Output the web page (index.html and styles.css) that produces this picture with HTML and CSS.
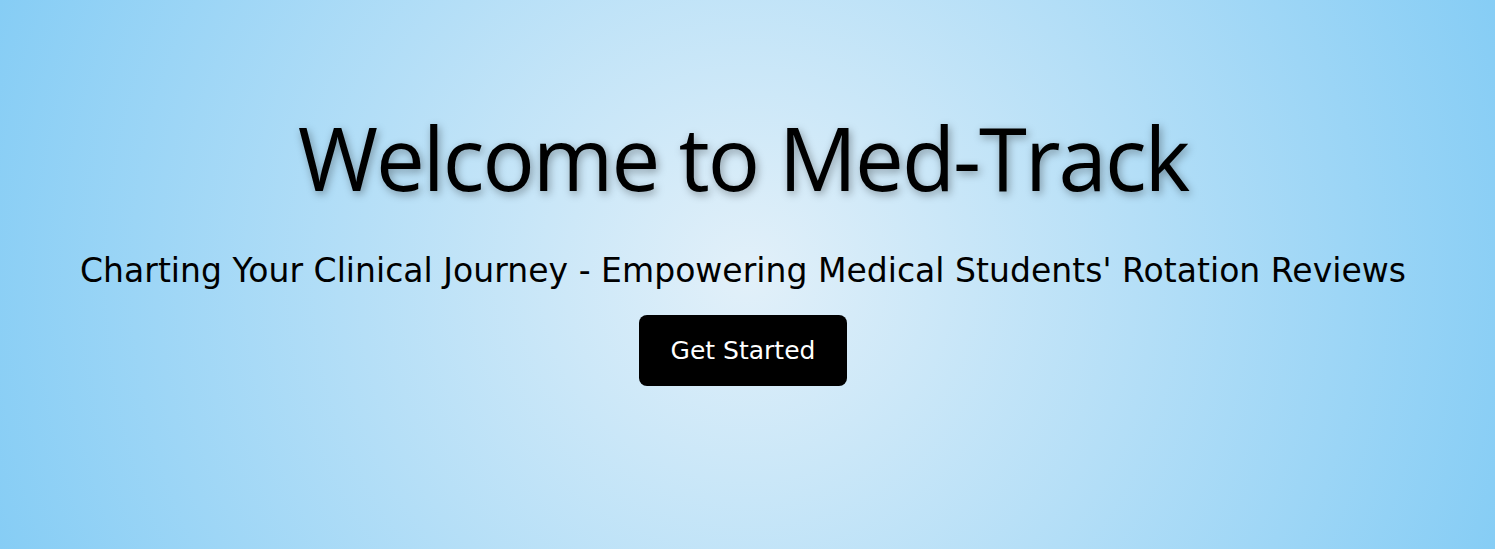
FILE: index.html
```html
<!DOCTYPE html>
<html lang="en">
<head>
<meta charset="utf-8">
<title>Med-Track</title>
<link rel="stylesheet" href="styles.css">
</head>
<body>
<main class="hero">
  <h1 class="hero-title">Welcome to Med-Track</h1>
  <p class="hero-subtitle">Charting Your Clinical Journey - Empowering Medical Students' Rotation Reviews</p>
  <button class="hero-button" type="button">Get Started</button>
</main>
</body>
</html>
```

FILE: styles.css
```css
html, body {
  margin: 0;
  padding: 0;
  height: 100%;
}
body {
  background: radial-gradient(circle at 50% 50%, #e2f0f9 0%, #86cdf5 100%);
  font-family: "DejaVu Sans", Verdana, sans-serif;
  color: #000;
}
.hero {
  min-height: 100vh;
  display: flex;
  flex-direction: column;
  align-items: center;
  justify-content: center;
  text-align: center;
  box-sizing: border-box;
  padding: 0 9px 58px 0;
}
.hero-title {
  font-family: "Open Sans", "Noto Sans", sans-serif;
  font-weight: 400;
  font-size: 87px;
  letter-spacing: -2px;
  line-height: 1.2;
  margin: 0 0 41px;
  text-shadow: 2px 3px 8px rgba(0, 0, 0, 0.35);
}
.hero-subtitle {
  font-size: 33px;
  letter-spacing: 0.03px;
  margin: 0 0 25px;
}
.hero-button {
  font-family: "DejaVu Sans", Verdana, sans-serif;
  font-size: 25px;
  color: #fff;
  background: #000;
  border: none;
  border-radius: 8px;
  padding: 21px 32px;
  cursor: pointer;
}
```
